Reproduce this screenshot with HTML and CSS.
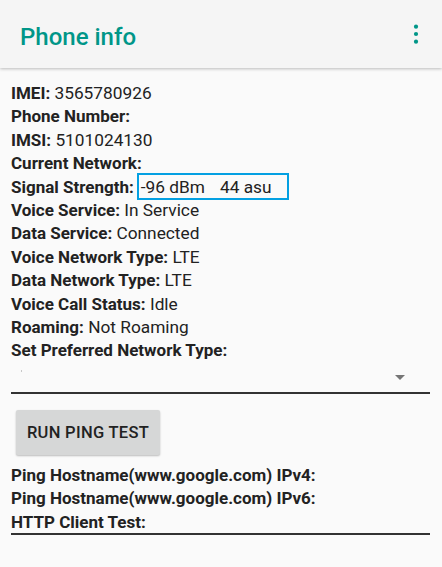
FILE: index.html
```html
<!DOCTYPE html>
<html lang="en">
<head>
  <meta charset="UTF-8">
  <meta name="viewport" content="width=device-width, initial-scale=1.0">
  <title>Phone info</title>
  <link rel="stylesheet" href="styles.css">
</head>
<body>

<header class="app-bar">
  <h1 class="app-title">Phone info</h1>
  <svg class="overflow-icon" width="24" height="24" viewBox="0 0 24 24">
    <circle cx="12" cy="4.7" r="2.1"/>
    <circle cx="12" cy="12" r="2.1"/>
    <circle cx="12" cy="19.7" r="2.1"/>
  </svg>
</header>

<main class="content">
  <!-- 端末情報 -->
  <div class="row"><b>IMEI:</b> 3565780926</div>
  <div class="row"><b>Phone Number:</b></div>
  <div class="row"><b>IMSI:</b> 5101024130</div>
  <div class="row"><b>Current Network:</b></div>
  <div class="row"><b>Signal Strength:</b><span class="signal">-96 dBm<span class="asu">44 asu</span></span></div>
  <div class="row"><b>Voice Service:</b> In Service</div>
  <div class="row"><b>Data Service:</b> Connected</div>
  <div class="row"><b>Voice Network Type:</b> LTE</div>
  <div class="row"><b>Data Network Type:</b> LTE</div>
  <div class="row"><b>Voice Call Status:</b> Idle</div>
  <div class="row"><b>Roaming:</b> Not Roaming</div>
  <div class="row"><b>Set Preferred Network Type:</b></div>

  <!-- ネットワーク選択 -->
  <div class="spinner">
    <span class="spinner-text"></span>
    <span class="spinner-arrow"></span>
  </div>

  <button type="button" class="ping-btn">RUN PING TEST</button>

  <div class="ping-results">
    <div class="row"><b>Ping Hostname(www.google.com) IPv4:</b></div>
    <div class="row"><b>Ping Hostname(www.google.com) IPv6:</b></div>
    <div class="row row-last"><b>HTTP Client Test:</b></div>
  </div>
</main>

</body>
</html>
```

FILE: styles.css
```css
/* 共通スタイル */
body {
  font-family: Roboto, "Noto Sans", sans-serif;
  margin: 0;
  padding: 0;
  background-color: #fafafa;
  color: #222222;
  height: 567px;
  overflow: hidden;
}

.app-bar {
  display: flex;
  align-items: center;
  height: 68px;
  padding: 0 14px 0 20px;
  background-color: #f5f5f5;
  box-shadow: 0 1px 3px rgba(0, 0, 0, 0.25);
  position: relative;
}

.app-title {
  margin: 0;
  padding-top: 6px;
  font-size: 24px;
  font-weight: 500;
  color: #009688;
}

.overflow-icon {
  margin-left: auto;
  fill: #009688;
}

.content {
  padding: 14px 12px 0 11px;
}

.row {
  font-size: 17.3px;
  line-height: 23.4px;
  white-space: nowrap;
}

.row b {
  font-size: 17px;
  font-weight: 700;
}

.signal {
  margin-left: 3px;
  padding: 2px 15px 1px 2px;
  border: 2px solid #03a0e2;
}

.asu {
  margin-left: 15px;
}

.spinner {
  display: flex;
  align-items: center;
  height: 29px;
  border-bottom: 2px solid #333333;
}

.spinner-text {
  align-self: flex-start;
  width: 1px;
  height: 2px;
  margin: 7px 0 0 10px;
  background-color: #c8c8c8;
}

.spinner-arrow {
  margin-left: auto;
  margin-right: 25px;
  width: 0;
  height: 0;
  border-left: 5px solid transparent;
  border-right: 5px solid transparent;
  border-top: 5px solid #757575;
}

.ping-btn {
  display: block;
  width: 144px;
  height: 45px;
  margin: 16px 0 0 5px;
  padding: 0;
  border: none;
  border-radius: 2px;
  background-color: #d6d7d7;
  box-shadow: 0 1px 2px rgba(0, 0, 0, 0.25);
  font-family: Roboto, "Noto Sans", sans-serif;
  font-size: 16.5px;
  font-weight: 500;
  letter-spacing: 0.3px;
  color: #222222;
}

.ping-results {
  margin-top: 9px;
}

.row-last {
  height: 22px;
  border-bottom: 2px solid #333333;
}
```
